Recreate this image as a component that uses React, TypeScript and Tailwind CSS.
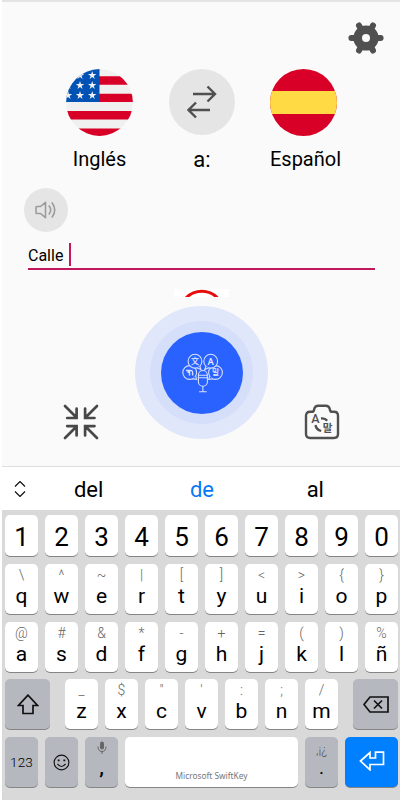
import { FC, ReactNode } from 'react'

type KeyProps = {
  label?: ReactNode
  hint?: ReactNode
  className?: string
  children?: ReactNode
}

const digits = ['1', '2', '3', '4', '5', '6', '7', '8', '9', '0']

const topRow = [
  ['q', '\\'], ['w', '^'], ['e', '~'], ['r', '|'], ['t', '['],
  ['y', ']'], ['u', '<'], ['i', '>'], ['o', '{'], ['p', '}'],
]

const homeRow = [
  ['a', '@'], ['s', '#'], ['d', '&'], ['f', '*'], ['g', '-'],
  ['h', '+'], ['j', '='], ['k', '('], ['l', ')'], ['ñ', '%'],
]

const bottomRow = [
  ['z', '_'], ['x', '$'], ['c', '"'], ['v', "'"], ['b', ':'], ['n', ';'], ['m', '/'],
]

const Key: FC<KeyProps> = ({ label, hint, className = 'w-[33px] bg-white', children }) => (
  <button
    type="button"
    className={`flex h-[50px] shrink-0 flex-col items-center rounded-[5px] shadow-[0_1px_0.5px_#858585] ${className}`}
  >
    {children ?? (
      <>
        <span className="mt-[3px] h-4 text-sm leading-4 font-light text-[#666]">{hint}</span>
        <span className="mt-[1px] text-[21px] leading-6">{label}</span>
      </>
    )}
  </button>
)

const GearIcon = () => (
  <svg viewBox="0 0 36 34" className="h-[34px] w-9">
    <g stroke="#505050" strokeWidth="6" strokeLinecap="round">
      <path d="M3.400 17h29.200M11 4.500l14 25M25 4.500L11 29.500" />
    </g>
    <circle cx="18" cy="17" r="12.600" fill="#505050" />
    <circle cx="18" cy="17" r="4" fill="#fafafa" />
  </svg>
)

const UsFlag = () => (
  <svg viewBox="0 0 67 67" className="size-[67px]">
    <clipPath id="us">
      <circle cx="33.500" cy="33.500" r="33.400" />
    </clipPath>
    <g clipPath="url(#us)">
      <rect width="67" height="67" fill="#f0f0f0" />
      <path d="M33 7.300h34v8.400H33zM33 24.700h34v8.300H33zM0 42h67v8.400H0zM0 59.400h67V67H0z" fill="#d80027" />
      <path d="M0 0h33.500v33H0z" fill="#0052b4" />
      {[6.4, 16.4, 26.400].map((y) =>
        [2, 14, 26.200].map((x) => (
          <path
            key={`${x}-${y}`}
            transform={`translate(${x} ${y})`}
            d="M0-4.400L1-1.400H4.200L1.600.500L2.600 3.600L0 1.700L-2.600 3.600L-1.600.500L-4.200-1.400H-1Z"
            fill="#f0f0f0"
          />
        )),
      )}
    </g>
  </svg>
)

const SwapIcon = () => (
  <svg viewBox="0 0 30 34" className="h-[34px] w-[30px]" fill="none" stroke="#505050" strokeWidth="2.400">
    <path d="M6 9h21.500M20.500 1.500l7.500 7.500-7.500 7.500M23 25H1.500M9 17.500L1.500 25l7.500 7.500" />
  </svg>
)

const SpeakerIcon = () => (
  <svg viewBox="0 0 22 18" className="h-[18px] w-[22px]" fill="none" stroke="#9b9b9b" strokeWidth="1.600" strokeLinecap="round" strokeLinejoin="round">
    <path d="M1.800 5.500h3.700l5-4.200v15.400l-5-4.200H1.800q-.8 0-.8-.8V6.300q0-.8.8-.8zM14.200 5q3 4 0 8M17.200 2q5 7 0 14" />
  </svg>
)

// Four speech bubbles around a microphone
const VoiceIcon = () => (
  <svg viewBox="0 0 44 42" className="h-[42px] w-11" fill="#2962ff" stroke="#d5e0ff" strokeWidth="1.100">
    <circle cx="9.700" cy="20.500" r="6.900" />
    <circle cx="35.500" cy="20.500" r="6.900" />
    <circle cx="15" cy="9.200" r="6.900" />
    <circle cx="30.700" cy="9.200" r="6.900" />
    <path d="M19.800 14.300l1.200 3.400-3.800-1.900M26 14.300l-1.300 3.400 3.900-1.900M15.600 23.700l1 3.700-4.100-.5M29.700 23.700l-1 3.700 4.100-.5" />
    <rect x="18.400" y="18.500" width="9" height="15.800" rx="4.500" />
    <path d="M18.400 23.300h9M18.400 25.800h9M22.900 34.300v5.200M19.100 39.800h7.600" />
    <g fill="#e3ebff" stroke="none" textAnchor="middle" className="font-['Noto_Sans_CJK_KR',sans-serif] font-medium">
      <text x="15" y="12" fontSize="8">文</text>
      <text x="30.700" y="12.500" fontSize="9.500" className="font-[Roboto,sans-serif]">A</text>
      <text x="35.700" y="23.400" fontSize="8">말</text>
    </g>
    <path d="M6 18.500h2.200v2.500M9.500 23.500v-5h1.600q1.500 0 1.500 1.800v3.200" fill="none" strokeWidth="1.400" />
  </svg>
)

const CollapseIcon = () => (
  <svg viewBox="0 0 36 36" className="size-9" fill="none" stroke="#484848" strokeWidth="2.700" strokeLinecap="round">
    <path d="M2 2l11.500 11.500M13.600 4.500v9.500H4.200M34 2L22.500 13.500M22.100 4.500v9.500h9.400M2 34l11.500-11.500M13.600 31.500V22.100H4.200M34 34L22.500 22.500M22.100 31.500V22.100h9.400" />
  </svg>
)

const CameraIcon = () => (
  <svg viewBox="0 0 36 36" className="size-9" fill="none" stroke="#505050" strokeWidth="2.400" strokeLinejoin="round">
    <path d="M6 7.800h2.200q1.500 0 1.800-1.800.7-4.200 4.300-4.200h7.400q3.600 0 4.300 4.200.3 1.800 1.800 1.800H30q4 0 4 4V30q0 4-4 4H6q-4 0-4-4V11.800q0-4 4-4z" />
    <path d="M17 14.500q4-.6 6.200 2.300M11.500 21q.7 4.800 5.700 6" strokeWidth="2.300" />
    <g fill="#505050" stroke="none" textAnchor="middle">
      <text x="11.300" y="19.400" fontSize="12.500" className="font-[Roboto,sans-serif] font-medium">A</text>
      <text x="23.500" y="28.400" fontSize="10.500" className="font-['Noto_Sans_CJK_KR',sans-serif] font-bold">말</text>
    </g>
  </svg>
)

const Translator = () => (
  <main className="flex h-[464px] flex-col">
    <div className="flex h-[67px] justify-end pt-[19px] pr-4">
      <GearIcon />
    </div>
    <div className="ml-16 flex">
      <div className="flex w-[67px] flex-col items-center">
        <UsFlag />
        <span className="mt-[11px] text-[20px] leading-6 whitespace-nowrap">Inglés</span>
      </div>
      <div className="ml-9 flex w-[66px] flex-col items-center">
        <div className="flex size-[66px] items-center justify-center rounded-full bg-[#e5e5e5]">
          <SwapIcon />
        </div>
        <span className="mt-[13px] text-[22px] leading-6">a:</span>
      </div>
      <div className="ml-[35px] flex w-[67px] flex-col items-center">
        <div className="flex size-[67px] flex-col overflow-hidden rounded-full bg-[#d80027]">
          <div className="mt-[21.500px] h-[23.500px] bg-[#ffda44]" />
        </div>
        <span className="mt-[11px] ml-1 text-[20px] leading-6 whitespace-nowrap">Español</span>
      </div>
    </div>
    <div className="mt-4 ml-[22px] flex size-11 shrink-0 items-center justify-center rounded-full bg-[#e5e5e5]">
      <SpeakerIcon />
    </div>
    <div className="mt-[11px] ml-[26px] flex h-[27px] w-[347px] shrink-0 border-b-2 border-[#c2185b]">
      <span className="mt-[3px] text-base leading-5">Calle</span>
      <span className="ml-[5.500px] h-[23px] w-[2px] bg-[#c2185b]" />
    </div>
    <div className="mt-[19px] ml-[172px] h-2 w-[55px] shrink-0 overflow-hidden bg-white">
      <svg viewBox="0 0 55 8" className="h-2 w-[55px]">
        <circle cx="27.800" cy="24" r="21.700" fill="none" stroke="#e80c0c" strokeWidth="3" />
      </svg>
    </div>
    <div className="mt-[9px] flex justify-between pr-[60px] pl-[61px]">
      <div className="mt-[98px]">
        <CollapseIcon />
      </div>
      <div className="flex size-[133px] items-center justify-center rounded-full bg-[#e1e7fb]">
        <div className="flex size-[103px] items-center justify-center rounded-full bg-[#d6dffa]">
          <div className="flex size-[82px] items-center justify-center rounded-full bg-[#2962ff]">
            <VoiceIcon />
          </div>
        </div>
      </div>
      <div className="mt-[98px]">
        <CameraIcon />
      </div>
    </div>
  </main>
)

const Suggestions = () => (
  <div className="flex h-11 items-center border-t border-[#dedede] bg-white text-[22px]">
    <svg viewBox="0 0 12 16" className="ml-3 h-4 w-3" fill="none" stroke="#111" strokeWidth="1.200">
      <path d="M1 5.500l5-5 5 5M1 10.500l5 5 5-5" />
    </svg>
    <div className="mt-[1px] ml-1.5 grid w-[340px] grid-cols-3 text-center">
      <span>del</span>
      <span className="text-[#0877f5]">de</span>
      <span>al</span>
    </div>
  </div>
)

const Keyboard = () => (
  <div className="flex h-[290px] flex-col gap-[7.800px] bg-[#d9d9d9] pt-[5px] pl-[3px]">
    <div className="flex gap-[7px]">
      {digits.map((d) => (
        <button
          key={d}
          type="button"
          className="h-[41px] w-[33px] shrink-0 rounded-[5px] bg-white pt-[3px] text-[26px] leading-[38px] shadow-[0_1px_0.5px_#858585]"
        >
          {d}
        </button>
      ))}
    </div>
    <div className="flex gap-[7px]">
      {topRow.map(([label, hint]) => (
        <Key key={label} label={label} hint={hint} />
      ))}
    </div>
    <div className="flex gap-[7px]">
      {homeRow.map(([label, hint]) => (
        <Key key={label} label={label} hint={hint} />
      ))}
    </div>
    <div className="flex gap-[7px]">
      <Key className="mr-2 w-[45px] justify-center bg-[#b5b9bf]">
        <svg viewBox="0 0 22 21" className="h-[21px] w-[22px]" fill="none" stroke="#111" strokeWidth="1.700">
          <path d="M11 1.200L1.500 11.500H6v8h10v-8h4.500z" />
        </svg>
      </Key>
      {bottomRow.map(([label, hint]) => (
        <Key key={label} label={label} hint={hint} />
      ))}
      <Key className="ml-2 w-[45px] justify-center bg-[#b5b9bf]">
        <svg viewBox="0 0 26 17" className="h-[17px] w-[26px]" fill="none" stroke="#111" strokeWidth="1.700">
          <path d="M1 8.500L7 1h18v15H7zM11 4.500l8 8M19 4.500l-8 8" />
        </svg>
      </Key>
    </div>
    <div className="flex gap-[7px]">
      <Key className="w-[33px] justify-center bg-[#b5b9bf]">
        <span className="text-[13.500px] font-light tracking-[0.2px]">123</span>
      </Key>
      <Key className="w-[33px] justify-center bg-[#b5b9bf]">
        <svg viewBox="0 0 18 18" className="size-[17px]" fill="none" stroke="#111" strokeWidth="1.200">
          <circle cx="9" cy="9" r="7.800" />
          <path d="M4.700 10.500q4.300 5.500 8.600 0" />
          <path d="M5 6.800h2M11 6.800h2" strokeWidth="1.800" />
        </svg>
      </Key>
      <Key className="w-[33px] bg-[#b5b9bf]">
        <svg viewBox="0 0 10 14" className="mt-1 h-[14px] w-[10px]">
          <rect x="3" y="0.500" width="4" height="8" rx="2" fill="#666" />
          <path d="M1 5.500q0 5 4 5t4-5M5 10.500V13" fill="none" stroke="#666" />
        </svg>
        <span className="text-[21px] leading-6 font-medium">,</span>
      </Key>
      <Key className="w-[173px] justify-end bg-white">
        <span className="mb-[5px] font-['Noto_Sans',sans-serif] text-[8.300px] leading-3 text-[#777]">Microsoft SwiftKey</span>
      </Key>
      <Key className="w-[33px] bg-[#b5b9bf]">
        <span className="mt-[3px] text-[12.500px] leading-5 font-light text-[#555]">,¡¿</span>
        <span className="-mt-[3px] text-[19px] leading-[22px]">.</span>
      </Key>
      <Key className="w-[53px] justify-center bg-[#0080ff]">
        <svg viewBox="0 0 26 20" className="mb-[2px] h-5 w-[26px]" fill="none" stroke="white" strokeWidth="1.700">
          <path d="M1.500 10L11 1.500V7h5.500V1.200H24.500V13.500H11V18.800z" />
        </svg>
      </Key>
    </div>
  </div>
)

export default function App() {
  return (
    <div className="h-[800px] w-[400px] overflow-hidden bg-white pl-[2px] font-[Roboto,'Noto_Sans_CJK_KR',sans-serif] text-black">
      <div className="h-[800px] overflow-hidden border-t-2 border-[#e4e4e4] bg-[#fafafa]">
        <Translator />
        <Suggestions />
        <Keyboard />
      </div>
    </div>
  )
}
